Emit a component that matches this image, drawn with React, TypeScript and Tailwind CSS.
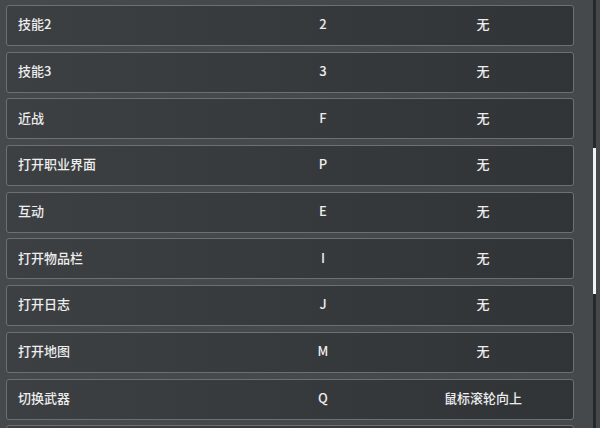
const rows = [
  { name: "技能2", key: "2", alt: "无" },
  { name: "技能3", key: "3", alt: "无" },
  { name: "近战", key: "F", alt: "无" },
  { name: "打开职业界面", key: "P", alt: "无" },
  { name: "互动", key: "E", alt: "无" },
  { name: "打开物品栏", key: "I", alt: "无" },
  { name: "打开日志", key: "J", alt: "无" },
  { name: "打开地图", key: "M", alt: "无" },
  { name: "切换武器", key: "Q", alt: "鼠标滚轮向上" },
  { name: "", key: "", alt: "" },
];

function KeyRow({ name, bind, alt }: { name: string; bind: string; alt: string }) {
  return (
    <div className="flex h-[41px] shrink-0 items-center rounded-[3px] border-[1.5px] border-[#6c7073] bg-gradient-to-r from-[#3d4043] to-[#313437] pb-[3px] text-[13px] font-medium text-[#ededed]">
      <div className="w-[236px] pl-[11px]">{name}</div>
      <div className="w-[160px] text-center">{bind}</div>
      <div className="w-[160px] text-center">{alt}</div>
    </div>
  );
}

export default function App() {
  return (
    <div
      className="flex h-[428px] w-[600px] overflow-hidden bg-[#46494c]"
      style={{ fontFamily: '"Noto Sans CJK SC", "Noto Sans", sans-serif' }}
    >
      <div className="flex w-[574px] flex-col gap-[5.7px] pl-[6px] pt-[5px]">
        {rows.map((r, i) => (
          <KeyRow key={i} name={r.name} bind={r.key} alt={r.alt} />
        ))}
      </div>
      <div className="ml-[19px] flex w-[3px] flex-col bg-[#26282a]">
        <div className="mt-[148px] h-[146px] w-[3px] bg-[#f2f2f2]" />
      </div>
    </div>
  );
}
